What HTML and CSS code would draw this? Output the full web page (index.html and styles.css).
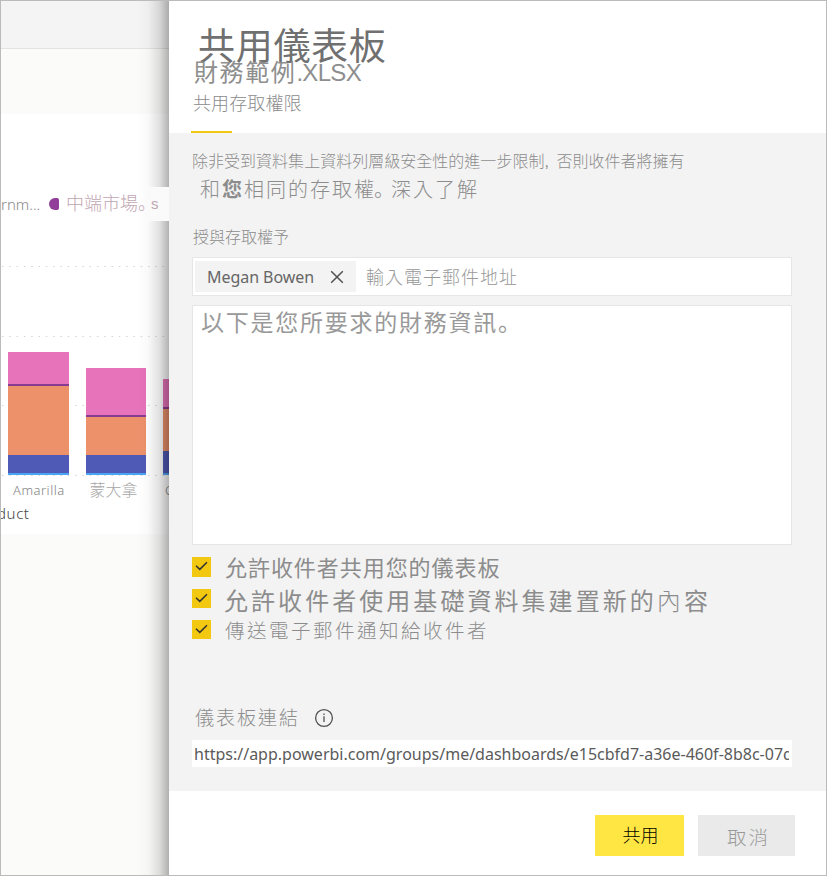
FILE: index.html
```html
<!DOCTYPE html>
<html lang="zh-Hant">
<head>
<meta charset="utf-8">
<title>共用儀表板</title>
<link rel="stylesheet" href="styles.css">
</head>
<body>
<div class="window">
  <section class="report">
    <div class="toolbar"></div>
    <div class="canvas-gap"></div>
    <div class="tile">
      <div class="legend">
        <span class="legend-cut">rnm...</span>
        <span class="dot"></span>
        <span class="legend-label">中端市場<span lang="ja" class="legend-stop">。</span></span>
        <span class="legend-tail">s</span>
      </div>
      <div class="plot">
        <svg class="gridlines" width="168" height="212" viewBox="0 0 168 212">
          <g stroke="#d5d5d5" stroke-width="1" stroke-dasharray="1.5 5.8">
            <path d="M1 1.5H168M1 71.5H168M1 140.5H168M1 210.5H168"/>
          </g>
        </svg>
        <div class="bars">
          <div class="bar"><i class="pink h32"></i><i class="purple"></i><i class="orange h69"></i><i class="blue h18"></i><i class="sky"></i></div>
          <div class="bar"><i class="pink h46"></i><i class="purple"></i><i class="orange h38"></i><i class="blue h18"></i><i class="sky"></i></div>
          <div class="bar"><i class="pink h28"></i><i class="purple"></i><i class="orange h42"></i><i class="blue h22"></i><i class="sky"></i></div>
        </div>
      </div>
      <div class="axis"><span class="ax-a">Amarilla</span><span class="ax-b">蒙大拿</span><span class="ax-c">C</span></div>
      <div class="axis-title"><span>duct</span></div>
    </div>
    <div class="shade"></div>
  </section>
  <main class="panel">
    <header class="head">
      <h1>共用儀表板</h1>
      <h2>財務範例<span>.XLSX</span></h2>
      <div class="tab">共用存取權限</div>
      <div class="tab-line"></div>
    </header>
    <section class="body">
      <p class="note">除非受到資料集上資料列層級安全性的進一步限制<span class="comma">,</span>否則收件者將擁有</p>
      <p class="note-big">和<b>您</b>相同的存取權<span lang="ja" class="stop">。</span>深入了解</p>
      <p class="grant">授與存取權予</p>
      <div class="people">
        <div class="chip"><span>Megan Bowen</span>
          <svg width="14" height="14" viewBox="0 0 14 14"><path d="M1.2 1.2L12.8 12.8M12.8 1.2L1.2 12.8" stroke="#505050" stroke-width="1.5" fill="none"/></svg>
        </div>
        <span class="placeholder">輸入電子郵件地址</span>
      </div>
      <div class="message">以下是您所要求的財務資訊<span lang="ja">。</span></div>
      <div class="checks">
        <div class="check c1"><svg width="19" height="20" viewBox="0 0 19 20"><path d="M4 8.7L7.8 12.4L15 5.2"/></svg><span>允許收件者共用您的儀表板</span></div>
        <div class="check c2"><svg width="19" height="19" viewBox="0 0 19 19"><path d="M4 8.7L7.8 12.4L15 5.2"/></svg><span>允許收件者使用基礎資料集建置新的<em>內</em>容</span></div>
        <div class="check c3"><svg width="19" height="19" viewBox="0 0 19 19"><path d="M4 8.7L7.8 12.4L15 5.2"/></svg><span>傳送電子郵件通知給收件者</span></div>
      </div>
      <div class="link-label"><span>儀表板連結</span>
        <svg width="20" height="20" viewBox="0 0 20 20"><circle cx="10" cy="10" r="8.4" fill="none" stroke="#505050" stroke-width="1.3"/><path d="M10 8.3V14M10 5.6V7" stroke="#505050" stroke-width="1.3"/></svg>
      </div>
      <div class="url"><span>https://app.powerbi.com/groups/me/dashboards/e15cbfd7-a36e-460f-8b8c-07d</span></div>
    </section>
    <footer class="foot">
      <button class="share">共用</button>
      <button class="cancel">取消</button>
    </footer>
  </main>
</div>
</body>
</html>
```
FILE: styles.css
```css
* { box-sizing: border-box; }
body { margin: 0; font-family: "Liberation Sans", "Noto Sans CJK JP", sans-serif; font-weight: 300; color: #8c8c8c; }
h1, h2, p { margin: 0; font-weight: 300; }
.window { width: 827px; height: 876px; border: 1px solid #bbb; display: flex; overflow: hidden; background: #fff; }

.report { position: relative; width: 168px; height: 874px; background: #fbfbf9; overflow: hidden; font-family: "Noto Sans", "Noto Sans CJK JP", sans-serif; }
.toolbar { height: 48px; background: #f4f4f4; border-bottom: 1px solid #e3e3e3; }
.canvas-gap { height: 65px; }
.tile { height: 420px; background: #fff; padding-top: 73px; }
.legend { display: flex; height: 34px; line-height: 34px; white-space: nowrap; }
.legend-cut { width: 48px; font-size: 15px; color: #8a8a8a; padding-left: 0; }
.dot { width: 10px; height: 12px; margin-top: 11px; border-radius: 6px 2px 2px 6px; background: #913e9b; }
.legend-label { width: 88px; padding-left: 7px; font-size: 18px; color: #bfa6b2; line-height: 33px; }
.legend-stop { display: inline-block; width: 8px; }
.legend-tail { position: relative; z-index: 2; width: 22px; padding-left: 4px; font: 300 15px/33px "Liberation Sans", sans-serif; color: #bfa6b2; background: #fafafa; }
.plot { position: relative; height: 255px; padding-top: 44px; }
.gridlines { display: block; }
.bars { position: absolute; left: 7px; bottom: 1px; display: flex; align-items: flex-end; gap: 17px; }
.bar { width: 60.6px; flex: none; }
.bar i { display: block; }
.pink { background: #e773bb; }
.purple { height: 2px; background: #873c93; }
.orange { background: #ed916b; }
.blue { background: #4f5ab6; }
.sky { height: 2px; background: #4aa3f5; }
.h18 { height: 18px; } .h22 { height: 22px; } .h28 { height: 28px; } .h32 { height: 32px; }
.h38 { height: 38px; } .h42 { height: 42px; } .h46 { height: 47px; } .h69 { height: 69px; }
.axis { display: flex; height: 27px; line-height: 28px; font-size: 13px; letter-spacing: .5px; color: #858585; white-space: nowrap; }
.ax-a { width: 87.5px; padding-left: 12px; flex: none; }
.ax-b { width: 76.5px; padding-left: 1px; flex: none; font-size: 16px; letter-spacing: 0; color: #a6a6a6; }
.axis-title { height: 20px; line-height: 20px; font-size: 15px; letter-spacing: .6px; color: #444; }
.axis-title span { display: block; margin-left: -4px; }
.shade { position: absolute; top: 0; right: 0; width: 32px; height: 100%; background: linear-gradient(to right, rgba(0,0,0,0), rgba(0,0,0,.025) 35%, rgba(0,0,0,.12) 70%, rgba(0,0,0,.3)); }

.panel { width: 657px; display: flex; flex-direction: column; white-space: nowrap; }
.head { height: 132px; padding: 24px 0 0 22px; background: #fff; }
h1 { height: 36px; line-height: 46px; padding-left: 7px; font-size: 37px; letter-spacing: .7px; color: #707070; font-weight: 400; }
h2 { height: 27px; line-height: 24px; padding-left: 3px; font-size: 24px; letter-spacing: 1.6px; font-weight: 400; color: #8e8e8e; }
h2 span { letter-spacing: -.7px; }
.tab { height: 43px; line-height: 33px; padding-left: 2px; font-size: 18px; letter-spacing: .1px; }
.tab-line { width: 41px; height: 2px; background: #f2c811; }

.body { height: 658px; padding: 16px 0 0 23px; background: #f3f3f3; }
.note { height: 26px; line-height: 26px; font-size: 16px; letter-spacing: .02px; }
.comma { display: inline-block; width: 12px; }
.note-big { height: 30px; line-height: 30px; padding-left: 8px; font-size: 20px; letter-spacing: 2px; }
.note-big b { font-weight: 700; }
.stop { display: inline-block; width: 15px; text-indent: -2px; }
.grant { height: 52px; line-height: 65px; padding-left: 1px; font-size: 16px; }
.people { width: 600px; height: 39px; padding: 3px 2px; display: flex; background: #fff; border: 1px solid #e6e6e6; }
.chip { width: 161px; height: 31px; padding-left: 12px; display: flex; align-items: center; background: #f3f3f3; font: 400 16px/31px "Noto Sans", sans-serif; color: #666; }
.chip span { width: 123px; padding-top: 1px; letter-spacing: -.05px; }
.placeholder { padding-left: 10px; font-size: 18px; line-height: 34px; letter-spacing: 1px; color: #999; }
.message { width: 600px; height: 240px; margin-top: 9px; padding-left: 8px; background: #fff; border: 1px solid #e6e6e6; font-size: 23px; line-height: 34px; letter-spacing: 1.75px; color: #999; font-weight: 400; }
.checks { padding-top: 12px; height: 152px; }
.check { display: flex; height: 32px; }
.check svg { background: #f2c811; flex: none; }
.check path { stroke: #333; stroke-width: 1.5; fill: none; }
.check span { margin-left: 14px; }
.c1 { font-size: 22px; letter-spacing: .95px; line-height: 23px; font-weight: 400; }
.c2 { font-size: 24px; letter-spacing: 3.05px; line-height: 26px; height: 31px; font-weight: 400; }
.c2 span { margin-left: 13px; }
.c2 em { font-style: normal; font-weight: 300; }
.c3 { font-size: 19.5px; letter-spacing: 2.5px; line-height: 22px; }
.link-label { display: flex; align-items: center; height: 40px; padding-left: 3px; font-size: 19px; letter-spacing: 2px; }
.link-label span { margin-top: -1px; }
.link-label svg { margin: 1px 0 0 14px; }
.url { width: 600px; height: 27px; margin-top: 3px; padding: 0 3px 0 2px; background: #fff; }
.url span { display: block; height: 27px; overflow: hidden; font: 400 16px/29px "Noto Sans", sans-serif; color: #5a5a5a; }

.foot { flex: 1; padding: 24px 31px 0 0; display: flex; justify-content: flex-end; align-items: flex-start; gap: 14px; background: #fff; }
button { border: 0; padding: 0; height: 41px; font-family: inherit; font-weight: 400; }
.share { width: 89px; background: #ffe642; color: #000; font-size: 18px; font-weight: 300; padding: 0 0 3px 2px; }
.cancel { width: 97px; background: #eaeaea; color: #999; font-size: 19.5px; font-weight: 300; letter-spacing: 2px; padding: 2px 0 0 4px; }
```
